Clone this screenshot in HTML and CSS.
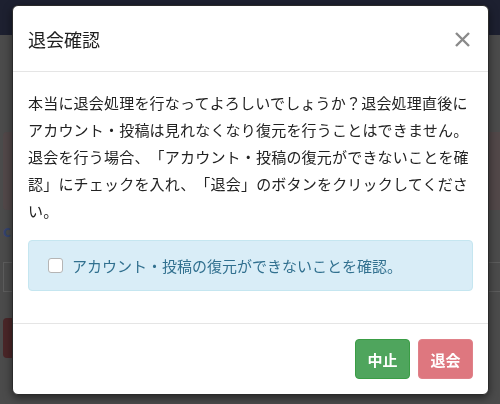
FILE: index.html
```html
<!DOCTYPE html>
<html lang="ja">
<head>
    <meta charset="UTF-8">
    <meta name="viewport" content="width=device-width, initial-scale=1.0">
    <title>退会確認</title>
    <link rel="stylesheet" href="styles.css">
</head>
<body>
    <div class="navbar"></div>
    <div class="page">
        <div class="notice"></div>
        <div class="page-link">c</div>
        <div class="page-field"></div>
        <div class="page-btn"></div>
    </div>

    <div class="overlay">
        <div class="modal">
            <div class="modal-header">
                <h4 class="modal-title">退会確認</h4>
                <button class="close" type="button" aria-label="Close">
                    <svg width="17" height="17" viewBox="0 0 17 17">
                        <path d="M2 2 L15 15 M15 2 L2 15" stroke="#8a8a8a" stroke-width="2.4" fill="none"/>
                    </svg>
                </button>
            </div>
            <div class="modal-body">
                <p class="message">本当に退会処理を行なってよろしいでしょうか？退会処理直後にアカウント・投稿は見れなくなり復元を行うことはできません。退会を行う場合、「アカウント・投稿の復元ができないことを確認」にチェックを入れ、「退会」のボタンをクリックしてください。</p>
                <label class="alert-info">
                    <input type="checkbox" class="check">
                    <span>アカウント・投稿の復元ができないことを確認。</span>
                </label>
            </div>
            <div class="modal-footer">
                <button class="btn btn-success" type="button">中止</button>
                <button class="btn btn-danger" type="button">退会</button>
            </div>
        </div>
    </div>
</body>
</html>
```

FILE: styles.css
```css
* {
    margin: 0;
    padding: 0;
    box-sizing: border-box;
}
body {
    font-family: "Noto Sans CJK JP", "Noto Sans", sans-serif;
    background: #4b4b4b;
    color: #222;
    height: 404px;
    overflow: hidden;
    text-spacing-trim: space-all;
}
.navbar {
    height: 35px;
    background: #1d2030;
}
.page {
    padding: 97px 0 0 3px;
}
.notice {
    height: 78px;
    background: #524849;
    border-radius: 4px 0 0 4px;
}
.page-link {
    height: 52px;
    padding-top: 10px;
    color: #33436e;
    font-size: 15px;
    font-weight: bold;
}
.page-field {
    height: 30px;
    border: 1px solid #5c5c5c;
    border-right: none;
}
.page-btn {
    margin-top: 26px;
    width: 60px;
    height: 40px;
    background: #4a2628;
    border-radius: 4px;
}
.overlay {
    position: fixed;
    top: 0;
    left: 0;
    right: 0;
    bottom: 0;
    padding: 5px 11px 0 12px;
}
.modal {
    background: #fff;
    border: 1px solid #2a2a2a;
    border-radius: 6px;
    box-shadow: 0 3px 9px rgba(0, 0, 0, 0.5);
    overflow: hidden;
}
.modal-header {
    height: 66px;
    padding: 0 17px 0 15px;
    border-bottom: 1px solid #e5e5e5;
    display: flex;
    align-items: center;
    justify-content: space-between;
}
.modal-title {
    font-size: 18px;
    font-weight: normal;
    color: #1e1e1e;
    padding-top: 1px;
}
.close {
    background: none;
    border: none;
    width: 17px;
    height: 17px;
    display: flex;
    margin-top: 1px;
}
.modal-body {
    padding: 17px 15px 15px;
}
.message {
    font-size: 15px;
    line-height: 27px;
    letter-spacing: 0.2px;
    color: #222;
}
.alert-info {
    margin: 16px 0 17px;
    height: 51px;
    padding: 0 19px;
    background: #d9edf7;
    border: 1px solid #c5e6f0;
    border-radius: 4px;
    color: #31708f;
    font-size: 15px;
    display: flex;
    align-items: center;
    gap: 9px;
}
.check {
    appearance: none;
    width: 15px;
    height: 15px;
    background: #fff;
    border: 1px solid #b5b5b5;
    border-radius: 3px;
}
.modal-footer {
    border-top: 1px solid #e5e5e5;
    padding: 15px;
    display: flex;
    justify-content: flex-end;
    gap: 8px;
}
.btn {
    width: 55px;
    height: 40px;
    border-radius: 4px;
    color: #fff;
    font-family: "Noto Sans CJK JP", sans-serif;
    font-size: 15px;
    font-weight: bold;
}
.btn-success {
    background: #4fa55d;
    border: 1px solid #3a9d45;
}
.btn-danger {
    background: #de777f;
    border: 1px solid #e08189;
}
```
